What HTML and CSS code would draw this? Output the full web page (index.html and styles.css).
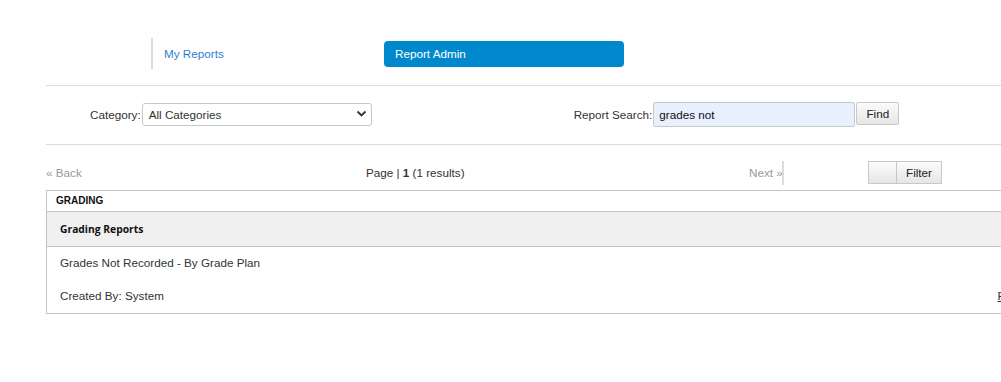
FILE: index.html
```html
<!DOCTYPE html>
<html>
<head>
<meta charset="utf-8">
<link rel="stylesheet" href="styles.css">
</head>
<body>
<div class="page">
  <nav class="tabs">
    <div class="tab-item"><a class="tab-link" href="#">My Reports</a></div>
    <div class="tab-active">Report Admin</div>
  </nav>
  <div class="search-row">
    <div class="field cat">
      <label class="lbl">Category:</label>
      <div class="select"><span>All Categories</span>
        <svg class="chev" width="11" height="8" viewBox="0 0 11 8"><path d="M1.5 1.5 L5.5 5.5 L9.5 1.5" fill="none" stroke="#333" stroke-width="1.8"/></svg>
      </div>
    </div>
    <div class="field srch">
      <label class="lbl">Report Search:</label>
      <div class="input">grades not</div>
      <button class="btn find">Find</button>
    </div>
  </div>
  <div class="pager">
    <span class="back">« Back</span>
    <span class="pageinfo">Page | <b>1</b> (1 results)</span>
    <span class="next">Next »</span>
    <div class="filter"><span class="seg blank"></span><span class="seg">Filter</span></div>
  </div>
  <div class="table">
    <div class="group">GRADING</div>
    <div class="subhead">Grading Reports</div>
    <div class="row first">Grades Not Recorded - By Grade Plan</div>
    <div class="row meta"><span>Created By: System</span><a class="run" href="#">Run</a></div>
  </div>
</div>
</body>
</html>
```

FILE: styles.css
```css
html, body {
  margin: 0;
  padding: 0;
  overflow: hidden;
  background: #fff;
}
body {
  font-family: "Liberation Sans", Arial, sans-serif;
  font-size: 11.7px;
  color: #333;
}
.page {
  width: 1060px;
  padding: 38px 0 0 46px;
}
.tabs {
  display: flex;
  align-items: center;
  height: 31px;
  padding-left: 105px;
  padding-bottom: 16px;
  border-bottom: 1px solid #dcdcdc;
}
.tab-item {
  height: 31px;
  border-left: 2px solid #dcdcdc;
  padding-left: 11px;
  width: 220px;
  display: flex;
  align-items: center;
}
.tab-link {
  color: #2f7fd1;
  text-decoration: none;
}
.tab-active {
  width: 229px;
  height: 26px;
  line-height: 26px;
  padding-left: 11px;
  background: #0088cc;
  color: #fff;
  border-radius: 4px;
}
.search-row {
  display: flex;
  align-items: center;
  height: 56px;
  padding-bottom: 2px;
  border-bottom: 1px solid #dcdcdc;
}
.field {
  display: flex;
  align-items: center;
}
.cat {
  margin-left: 44px;
}
.srch {
  margin-left: 202px;
}
.lbl {
  margin-right: 1px;
}
.select {
  width: 228px;
  height: 21px;
  border: 1px solid #c8c8c8;
  border-radius: 3px;
  display: flex;
  align-items: center;
  justify-content: space-between;
}
.select span {
  padding-left: 6px;
}
.chev {
  margin-right: 4px;
}
.input {
  width: 195px;
  height: 23px;
  line-height: 23px;
  padding-left: 5px;
  background: #e8f0fe;
  border: 1px solid #c8c8c8;
  border-radius: 2px;
  color: #111;
}
.btn {
  font: inherit;
  color: #222;
  height: 23px;
  background: linear-gradient(#fbfbfb, #e6e6e6);
  border: 1px solid #c8c8c8;
  border-radius: 2px;
}
.find {
  width: 43px;
  margin-left: 1px;
  padding: 0;
  align-self: flex-start;
}
.pager {
  display: flex;
  align-items: flex-end;
  height: 40px;
  padding-bottom: 5px;
}
.back {
  color: #999;
  width: 320px;
  line-height: 24px;
}
.pageinfo {
  color: #333;
  width: 383px;
  line-height: 24px;
}
.next {
  color: #999;
  white-space: nowrap;
  width: 33px;
  border-right: 2px solid #dcdcdc;
  height: 24px;
  line-height: 24px;
}
.filter {
  margin-left: 84px;
  display: flex;
  height: 23px;
  margin-bottom: 1px;
}
.seg {
  border: 1px solid #c8c8c8;
  background: linear-gradient(#fbfbfb, #e6e6e6);
  height: 21px;
  line-height: 21px;
  padding: 0 9px;
  color: #222;
}
.seg.blank {
  width: 27px;
  padding: 0;
  border-right: 0;
}
.table {
  border: 1px solid #c4c4c4;
  width: 1000px;
}
.group {
  height: 20px;
  line-height: 20px;
  padding-left: 9px;
  font-size: 10px;
  font-weight: bold;
  color: #111;
  border-bottom: 1px solid #c4c4c4;
}
.subhead {
  height: 34px;
  line-height: 34px;
  padding-left: 13px;
  background: #f0f0f0;
  font-family: "Open Sans", sans-serif;
  font-size: 10.3px;
  font-weight: bold;
  color: #111;
  border-bottom: 1px solid #c4c4c4;
}
.row {
  padding-left: 13px;
}
.first {
  height: 32px;
  line-height: 32px;
}
.meta {
  display: flex;
  height: 34px;
  line-height: 34px;
  padding-right: 28px;
}
.run {
  color: #333;
  margin-left: auto;
}
```
